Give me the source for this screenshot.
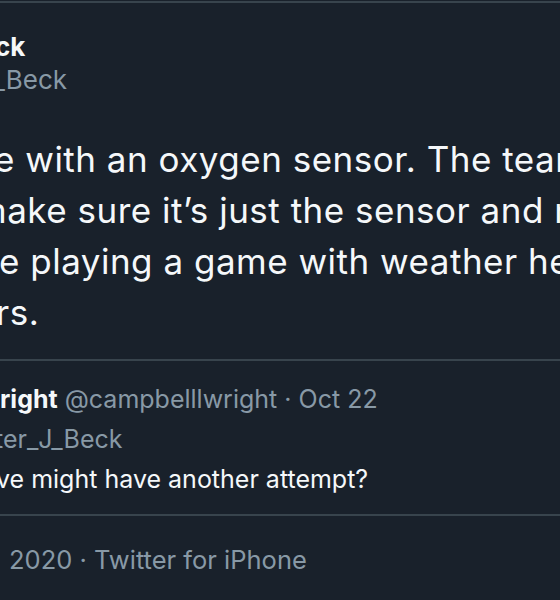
import React from 'react';

const gray = 'text-[#8899a6]';

export default function App() {
  return (
    <div className="w-[560px] h-[600px] overflow-hidden bg-[#19212b] font-['Inter',sans-serif] text-[#f5f8fa]">
      <div className="mt-px h-[2px] bg-[#38444d]" />

      {/* author */}
      <div className="pt-[27px] whitespace-nowrap">
        <div className="-ml-[5px] text-[26px] leading-[33px] font-bold">ck</div>
        <div className={`-ml-[7px] text-[26px] leading-[33px] ${gray}`}>_Beck</div>
      </div>

      {/* tweet body */}
      <div className="mt-[38px] pb-[21px] text-[35px] leading-[51px] tracking-[0.5px] whitespace-nowrap">
        <div className="-ml-[6px]">e with an oxygen sensor. The team</div>
        <div className="-ml-[24px]">make sure it’s just the sensor and not</div>
        <div className="-ml-px">e playing a game with weather here</div>
        <div className="-ml-[4px]">rs.</div>
      </div>

      <div className="h-[2px] bg-[#38444d]" />

      {/* reply */}
      <div className="pt-[18px] pb-[15px] text-[25px] leading-[40px] whitespace-nowrap">
        <div>
          <span className="font-bold">right</span>
          <span className={gray}> @campbelllwright · Oct 22</span>
        </div>
        <div className={`-ml-[5px] ${gray}`}>ter_J_Beck</div>
        <div className="-ml-[4px]">ve might have another attempt?</div>
      </div>

      <div className="h-[2px] bg-[#38444d]" />

      {/* meta */}
      <div className={`pt-[27px] pl-[9px] text-[25.5px] leading-[33px] whitespace-nowrap ${gray}`}>
        2020 · Twitter for iPhone
      </div>
    </div>
  );
}
